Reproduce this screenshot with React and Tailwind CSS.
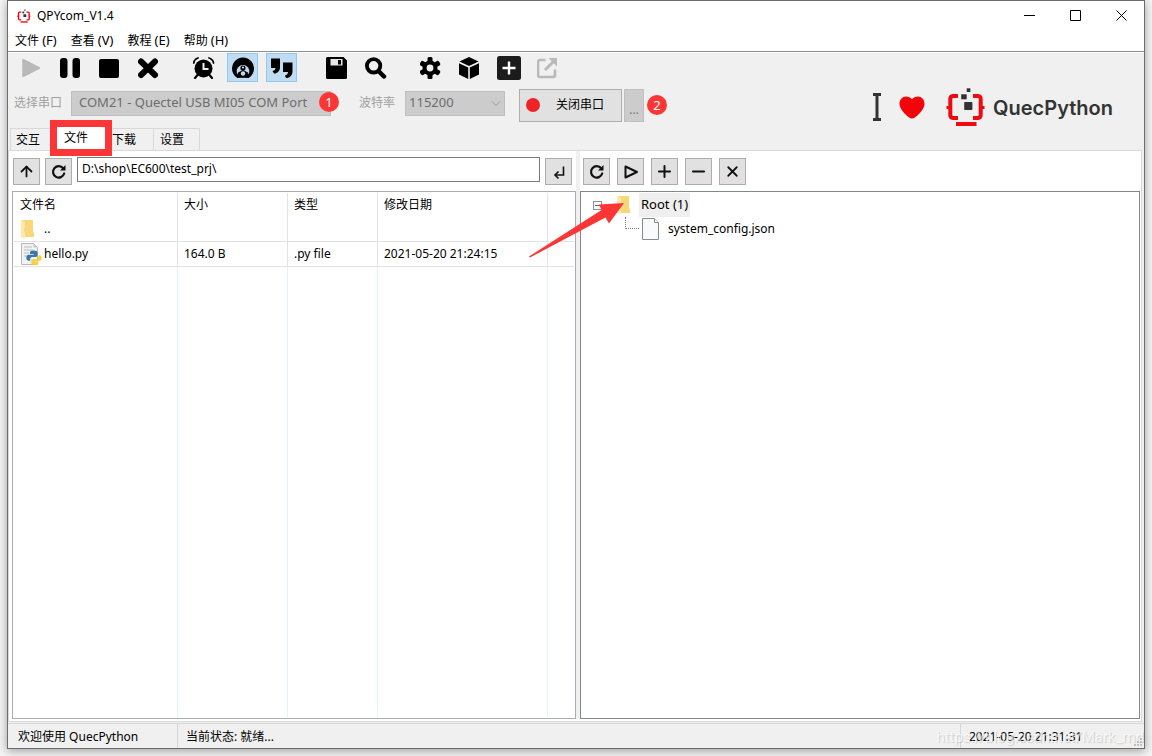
import { Minus, Plus, X, ArrowUp } from 'lucide-react';

const menus = [
  { label: '文件', hotkey: '(F)' },
  { label: '查看', hotkey: '(V)' },
  { label: '教程', hotkey: '(E)' },
  { label: '帮助', hotkey: '(H)' },
];

const PlayIcon = () => (
  <svg viewBox="0 0 22 22" className="w-[22px] h-[22px]" fill="currentColor">
    <path d="M2 2.500v17L18.500 11z" stroke="currentColor" strokeWidth="1.5" strokeLinejoin="round" />
  </svg>
);

const PauseIcon = () => (
  <svg viewBox="0 0 22 22" className="w-[22px] h-[22px]" fill="currentColor">
    <rect x="0" y="1" width="7.500" height="20" rx="3" />
    <rect x="12.500" y="1" width="7.500" height="20" rx="3" />
  </svg>
);

const StopIcon = () => (
  <svg viewBox="0 0 22 22" className="w-[22px] h-[22px]" fill="currentColor">
    <rect x="0" y="2" width="20" height="19" rx="2" />
  </svg>
);

const ClearIcon = () => (
  <svg viewBox="0 0 22 22" className="w-[22px] h-[22px]" fill="none" stroke="currentColor" strokeWidth="6" strokeLinecap="round">
    <path d="M3 4.500l14 13.500M17 4.500L3 18" />
  </svg>
);

const AlarmIcon = () => (
  <svg viewBox="0 0 22 22" className="w-[22px] h-[22px]" fill="none" stroke="currentColor">
    <circle cx="10.500" cy="11.500" r="9" fill="currentColor" stroke="none" />
    <path d="M.8 6C1 4 2.500 1.800 5 1M20.500 6C20.300 4 18.500 1.800 16 1" strokeWidth="1.800" strokeLinecap="round" />
    <path d="M4.500 18L2 21M16.500 18l2.500 3" strokeWidth="2.200" strokeLinecap="round" />
    <path d="M10.500 6v6h5" stroke="#f0f0f0" strokeWidth="2" />
  </svg>
);

const DebugIcon = () => (
  <svg viewBox="0 0 22 22" className="w-[22px] h-[22px]">
    <path d="M5 20.800A11 11 0 1 1 17 20.800z" fill="#000" />
    <path d="M7.500 20.800L4.800 15.500A6.300 6.300 0 1 1 17.200 15.500L14.500 20.800z" fill="#c0dcf3" />
    <path d="M5 20.800L6 16l2.200.500v4.300zM17 20.800L16 16l-2.200.500v4.300z" fill="#000" />
    <circle cx="11" cy="11" r="2.600" fill="#000" />
    <circle cx="11" cy="10.500" r="1.100" fill="#c0dcf3" />
    <path d="M6 15.500l5-2.500 5 2.500-2 5.300H8z" fill="#000" />
    <circle cx="11" cy="16.500" r="2.200" fill="#c0dcf3" />
  </svg>
);

const QuoteIcon = () => (
  <svg viewBox="0 0 24 22" className="w-6 h-[22px]" fill="currentColor">
    <path d="M1 1.500h9v8.500c0 4-2.500 6.500-6 6.500l-1.500-2.500c2-.500 3-1.500 3-3H1z" />
    <path d="M13 5.500h9.500V14c0 4.500-2.500 7-6.500 7l-1-2.500c2-.500 3-1.500 3-3.500H13z" />
  </svg>
);

const SaveIcon = () => (
  <svg viewBox="0 0 22 22" className="w-[22px] h-[22px]">
    <path d="M1.500 0h16L21 3.500v17a1.500 1.500 0 0 1-1.500 1.500h-18A1.500 1.500 0 0 1 0 20.500v-19A1.500 1.500 0 0 1 1.500 0z" fill="#000" />
    <path d="M4.500 2h12v6.500h-12z" fill="#e8e8e8" />
    <path d="M12 3h3v4.500h-3z" fill="#000" />
  </svg>
);

const FindIcon = () => (
  <svg viewBox="0 0 22 22" className="w-[22px] h-[22px]" fill="none" stroke="currentColor" strokeLinecap="round">
    <circle cx="8.600" cy="8.800" r="6.700" strokeWidth="3.800" />
    <path d="M14 14.500l5 5" strokeWidth="4.500" />
  </svg>
);

const GearIcon = () => (
  <svg viewBox="1 0 22 22" className="w-[22px] h-[22px]">
    <g fill="#000">
      <rect x="8.500" y="0" width="5" height="22" rx="1.500" />
      <rect x="8.500" y="0" width="5" height="22" rx="1.500" transform="rotate(60 11 11)" />
      <rect x="8.500" y="0" width="5" height="22" rx="1.500" transform="rotate(120 11 11)" />
      <circle cx="11" cy="11" r="7.500" />
    </g>
    <circle cx="11" cy="11" r="3.400" fill="#f0f0f0" />
  </svg>
);

const CubeIcon = () => (
  <svg viewBox="1 0 22 22" className="w-[22px] h-[22px]" fill="currentColor">
    <path d="M11 0l9.500 4.500L11 9 1.500 4.500z" />
    <path d="M1 6.200l9.200 4.300V22L1 17.500zM21 6.200l-9.200 4.300V22l9.200-4.500z" />
  </svg>
);

const AddIcon = () => (
  <svg viewBox="0 0 24 24" className="w-6 h-6">
    <rect width="24" height="24" rx="2.500" fill="#1c1c1c" />
    <path d="M12 5.500v13M5.500 12h13" stroke="#fff" strokeWidth="2.400" />
  </svg>
);

const ShareIcon = () => (
  <svg viewBox="1 0 22 22" className="w-[22px] h-[22px]" fill="none" stroke="currentColor" strokeWidth="2.600">
    <path d="M9.500 3H4a2 2 0 0 0-2 2v13a2 2 0 0 0 2 2h13a2 2 0 0 0 2-2v-5.500" />
    <path d="M9 13l9-9" strokeWidth="3" />
    <path d="M12.500 1H21v8.500z" fill="currentColor" stroke="none" />
  </svg>
);

const toolGroups = [
  [
    { name: 'Run', icon: PlayIcon, disabled: true },
    { name: 'Pause', icon: PauseIcon },
    { name: 'Stop', icon: StopIcon },
    { name: 'Clear', icon: ClearIcon },
  ],
  [
    { name: 'Timestamp', icon: AlarmIcon },
    { name: 'Debug', icon: DebugIcon, active: true },
    { name: 'Quote', icon: QuoteIcon, active: true },
  ],
  [
    { name: 'Save', icon: SaveIcon },
    { name: 'Find', icon: FindIcon },
  ],
  [
    { name: 'Settings', icon: GearIcon },
    { name: 'Package', icon: CubeIcon },
    { name: 'Add', icon: AddIcon },
    { name: 'Export', icon: ShareIcon, disabled: true },
  ],
];

const RefreshIcon = () => (
  <svg viewBox="0 0 16 16" className="w-4 h-4" fill="none" stroke="#111" strokeWidth="2.200">
    <path d="M13.200 9.500A5.700 5.700 0 1 1 12.200 4.300" strokeLinecap="round" />
    <path d="M14.500 1v5.500H9z" fill="#111" stroke="none" />
  </svg>
);

const TriangleIcon = () => (
  <svg viewBox="0 0 16 16" className="w-4 h-4" fill="none" stroke="#111" strokeWidth="2" strokeLinejoin="round">
    <path d="M2.500 2.500v11L14 8z" />
  </svg>
);

const EnterIcon = () => (
  <svg viewBox="0 0 16 16" className="w-4 h-4" fill="none" stroke="#111" strokeWidth="1.600">
    <path d="M12.500 2.500v8.500H4" />
    <path d="M7.500 7.500L4 11l3.500 3.500" />
  </svg>
);

const FolderIcon = () => (
  <svg viewBox="0 0 16 20" className="w-4 h-5 shrink-0">
    <path d="M2 1h11v12l1 1v4H5z" fill="#f9d778" />
    <path d="M1 1l4 2v5l-1 2 1 9.500L1 18z" fill="#fce9a9" />
  </svg>
);

const PyFileIcon = () => (
  <svg viewBox="0 0 22 22" className="w-[22px] h-[22px] shrink-0">
    <path d="M1.500 .500h12l4 4v17h-16z" fill="#f1f2f3" stroke="#b5b9bc" />
    <path d="M13.500 .500v4h4z" fill="#c5c9cc" />
    <path d="M4 4h8M4 7h9M4 10h5M4 13h3" stroke="#b9bec2" />
    <path d="M13.500 7.500c-2.800 0-3.500.800-3.500 2.200V11h3.700v.700H9c-2 0-2.700 1.500-2.700 3.100s.800 3 2.700 3h1.200V16c0-1.200.900-2 2-2h3.600c1 0 1.700-.800 1.700-1.700V9.700c0-1.400-1.200-2.200-4-2.200z" fill="#3b77a8" />
    <path d="M14.800 22c2.700 0 3.600-.800 3.600-2.200v-1.200h-3.600V18h4.500c1.500 0 2.500-1.100 2.500-2.900s-1-2.800-2.400-2.800h-1.100V14c0 1.200-.900 2-1.900 2h-3.500c-1 0-1.700.800-1.700 1.700v2.100c0 1.400 1.100 2.200 3.600 2.200z" fill="#f7d046" />
  </svg>
);

const FileIcon = () => (
  <svg viewBox="0 0 18 22" className="w-[18px] h-[22px] shrink-0">
    <path d="M.500 .500h12l4 4v17H.500z" fill="#f8fafb" stroke="#8a8a8a" />
    <path d="M12.500 .500v4h4" fill="#fff" stroke="#8a8a8a" />
  </svg>
);

const Bracket = ({ className }) => (
  <svg viewBox="0 0 40 40" className={className}>
    <g fill="none" stroke="#ee0a10" strokeWidth="4">
      <path d="M12 9H7a3 3 0 0 0-2.700 3v16a3 3 0 0 0 2.700 3h5" />
      <path d="M27 9h5a3 3 0 0 1 2.700 3v16a3 3 0 0 1-2.700 3h-5" />
      <path d="M10 37h20.500" />
      <path d="M.500 20.500h3M35.500 20.500h3" strokeWidth="3" />
    </g>
    <g fill="#333">
      <rect x="20.700" y="1.300" width="3.700" height="3.700" />
      <rect x="15.200" y="7.300" width="5.500" height="5" />
      <rect x="18.200" y="15" width="8.200" height="8" rx=".8" />
    </g>
  </svg>
);

const Badge = ({ children, className = '' }) => (
  <span className={`w-5 h-5 rounded-full bg-[#fc3636] text-white text-[13px] leading-5 text-center ${className}`}>
    {children}
  </span>
);

const SmallButton = ({ label, children }) => (
  <button
    aria-label={label}
    className="w-[27px] h-[27px] shrink-0 flex items-center justify-center bg-[#e1e1e1] border border-[#adadad] text-[#111]"
  >
    {children}
  </button>
);

const TitleBar = () => (
  <header className="bg-white">
    <div className="h-[29px] flex items-center pl-[9px]">
      <Bracket className="w-[14px] h-[14px]" />
      <h1 className="pl-[6px]">QPYcom_V1.4</h1>
      <div className="ml-auto flex">
        <button aria-label="Minimize" className="w-[46px] flex justify-center">
          <svg viewBox="0 0 11 11" className="w-[11px] h-[11px]" stroke="#000"><path d="M0 5.500h11" /></svg>
        </button>
        <button aria-label="Maximize" className="w-[46px] flex justify-center">
          <svg viewBox="0 0 11 11" className="w-[11px] h-[11px]" stroke="#000" fill="none"><path d="M.500 .500h10v10H.500z" /></svg>
        </button>
        <button aria-label="Close" className="w-[46px] flex justify-center">
          <svg viewBox="0 0 11 11" className="w-[11px] h-[11px]" stroke="#000"><path d="M.500 .500l10 10M10.500 .500l-10 10" /></svg>
        </button>
      </div>
    </div>
    <nav className="h-[22px] flex items-center gap-[14px] pl-[7px] border-b border-[#8f8f8f]">
      {menus.map(({ label, hotkey }) => (
        <button key={hotkey}>
          {label} <span className="text-[13px]">{hotkey}</span>
        </button>
      ))}
    </nav>
  </header>
);

const ToolBar = () => (
  <div className="flex gap-6 pl-2">
    {toolGroups.map((group, i) => (
      <div key={i} className="flex gap-2">
        {group.map(({ name, icon: Icon, active, disabled }) => (
          <button
            key={name}
            aria-label={name}
            disabled={disabled}
            className={`w-[31px] h-[29px] flex items-center justify-center border ${
              active ? 'bg-[#c0dcf3] border-[#90c8f6]' : 'border-transparent'
            } ${disabled ? 'text-[#b9b9b9]' : 'text-black'}`}
          >
            <Icon />
          </button>
        ))}
      </div>
    ))}
  </div>
);

const Logo = () => (
  <div className="ml-auto flex items-center pr-[31px] pt-1">
    <svg viewBox="0 0 8 28" className="w-2 h-7"><path d="M0 1.500h8M0 26.500h8M4 1v26" stroke="#333" strokeWidth="3" /></svg>
    <svg viewBox="0 0 26 23" className="ml-[18px] w-[26px] h-[23px]" fill="#f20409">
      <path d="M13 22.500C10 22.500 1 14.500 .500 8.500 .200 3.500 3.500 .500 7 .500c2.500 0 4.500 1 6 2.800C14.500 1.500 16.500 .500 19 .500c3.500 0 6.800 3 6.500 8-.500 6-9.500 14-12.500 14z" />
    </svg>
    <Bracket className="ml-[21px] w-10 h-10" />
    <span className="pl-[7px] pt-px font-['Inter',sans-serif] font-semibold text-[20px] text-[#333]">QuecPython</span>
  </div>
);

const PortBar = () => (
  <div className="flex items-center h-[46px] pl-[6px] text-[#a0a0a0]">
    <label htmlFor="port" className="pb-1">选择串口</label>
    <div className="relative ml-[9px] mb-1">
      <select
        id="port"
        disabled
        className="block w-[260px] h-[25px] pl-[7px] appearance-none bg-[#ccc] border border-[#bfbfbf] text-[13px] text-[#6d6d6d]"
      >
        <option>COM21 - Quectel USB MI05 COM Port</option>
      </select>
      <Badge className="absolute -right-2 top-px">1</Badge>
    </div>
    <label htmlFor="baud" className="ml-7 pb-1">波特率</label>
    <div className="relative ml-[10px] mb-1">
      <select
        id="baud"
        disabled
        className="block w-[100px] h-[25px] pl-[3px] appearance-none bg-[#ccc] border border-[#bfbfbf] text-[13px] text-[#6d6d6d]"
      >
        <option>115200</option>
      </select>
      <svg viewBox="0 0 10 6" className="absolute right-1 top-[10px] w-[10px] h-[6px]" fill="none" stroke="#9a9a9a">
        <path d="M1 .500l4 4 4-4" />
      </svg>
    </div>
    <button className="ml-[14px] w-[103px] h-[33px] flex items-center pl-[6px] gap-4 bg-[#e1e1e1] border border-[#adadad] text-black">
      <span className="w-[14px] h-[14px] rounded-full bg-[#ee2326]" />
      关闭串口
    </button>
    <button aria-label="More" className="ml-[2px] w-5 h-[33px] flex items-end justify-center pb-[2px] bg-[#ccc] border border-[#bfbfbf] text-[#777]">
      ...
    </button>
    <Badge className="ml-[3px]">2</Badge>
    <Logo />
  </div>
);

const Tabs = () => (
  <div role="tablist" className="flex items-end pl-[2px] h-[22px]">
    <button role="tab" className="w-[46px] h-[22px] shrink-0 pl-[5px] text-left border-l border-t border-[#d9d9d9]">交互</button>
    <button role="tab" aria-selected="true" className="relative w-[50px] h-6 shrink-0 bg-white pl-2 text-left">
      文件
      <span className="absolute -left-[6px] -top-[6px] w-[62px] h-9 border-[7px] border-[#fc3636]" />
    </button>
    <button role="tab" className="w-12 h-[22px] shrink-0 pl-[6px] text-left border-r border-t border-[#d9d9d9]">下载</button>
    <button role="tab" className="w-[46px] h-[22px] shrink-0 pl-[6px] text-left border-r border-t border-[#d9d9d9]">设置</button>
  </div>
);

const files = [
  { icon: FolderIcon, name: '..', size: '', type: '', date: '' },
  { icon: PyFileIcon, name: 'hello.py', size: '164.0 B', type: '.py file', date: '2021-05-20 21:24:15' },
];

const cell = 'border-r border-b border-[#e2e2e2] pl-[6px] whitespace-nowrap';
const head = 'border-r border-[#e2e2e2] pl-[6px] text-left font-normal';
const blank = 'border-r border-[#e6f1fa]';

const LocalFiles = () => (
  <section className="relative flex flex-col min-w-0">
    <div className="flex items-start gap-[5px] pt-[7px] pl-px h-10">
      <SmallButton label="Up"><ArrowUp size={17} strokeWidth={2.500} /></SmallButton>
      <SmallButton label="Refresh"><RefreshIcon /></SmallButton>
      <input
        aria-label="Path"
        defaultValue={'D:\\shop\\EC600\\test_prj\\'}
        className="flex-1 min-w-0 h-[25px] px-1 pb-[2px] -mt-px bg-white border border-[#7a7a7a]"
      />
      <div className="pr-1"><SmallButton label="Go"><EnterIcon /></SmallButton></div>
    </div>
    <div className="flex-1 min-h-0 border border-[#abadb3] p-px">
      <table className="w-full h-full table-fixed border-separate border-spacing-0">
        <colgroup>
          <col className="w-[164px]" />
          <col className="w-[110px]" />
          <col className="w-[90px]" />
          <col className="w-[170px]" />
          <col />
        </colgroup>
        <thead>
          <tr className="h-6">
            <th className={head}>文件名</th>
            <th className={head}>大小</th>
            <th className={head}>类型</th>
            <th className={head}>修改日期</th>
            <th />
          </tr>
        </thead>
        <tbody>
          {files.map(({ icon: Icon, name, size, type, date }) => (
            <tr key={name} className="h-[25px]">
              <td className={cell}>
                <div className="flex items-center">
                  <span className="w-6 flex"><Icon /></span>
                  {name}
                </div>
              </td>
              <td className={cell}>{size}</td>
              <td className={cell}>{type}</td>
              <td className={cell}>{date}</td>
              <td className="border-b border-[#e2e2e2]" />
            </tr>
          ))}
          <tr>
            <td className={blank} />
            <td className={blank} />
            <td className={blank} />
            <td className={blank} />
            <td />
          </tr>
        </tbody>
      </table>
    </div>
  </section>
);

const DeviceFiles = () => (
  <section className="relative flex flex-col min-w-0">
    <div className="flex items-start gap-[7px] pt-[7px] pl-[3px] h-10">
      <SmallButton label="Refresh device"><RefreshIcon /></SmallButton>
      <SmallButton label="Run file"><TriangleIcon /></SmallButton>
      <SmallButton label="Add file"><Plus size={19} strokeWidth={2.500} /></SmallButton>
      <SmallButton label="Remove file"><Minus size={19} strokeWidth={2.500} /></SmallButton>
      <SmallButton label="Delete"><X size={17} strokeWidth={2.500} /></SmallButton>
    </div>
    <ul className="flex-1 min-h-0 border border-[#828790] pl-3 pt-px">
      <li>
        <div className="flex items-center h-6">
          <svg viewBox="0 0 9 9" className="w-[9px] h-[9px]">
            <rect x=".5" y=".5" width="8" height="8" fill="#fff" stroke="#919191" />
            <path d="M2 4.500h5" stroke="#4b63a7" />
          </svg>
          <span className="ml-[14px] flex"><FolderIcon /></span>
          <span className="ml-[7px] h-6 px-[2px] text-[13px] leading-[22px] bg-[#efefef]">Root (1)</span>
        </div>
        <ul>
          <li className="flex items-center h-6 pl-8">
            <span className="w-[14px] h-3 mb-3 border-l border-b border-dotted border-[#808080]" />
            <span className="ml-[3px] flex"><FileIcon /></span>
            <span className="pl-[8px]">system_config.json</span>
          </li>
        </ul>
      </li>
    </ul>
    {/* Pointer to the root folder */}
    <svg viewBox="0 0 100 60" className="absolute -left-[52px] top-[48px] w-[100px] h-[60px] pointer-events-none">
      <path d="M1 57.500L73.500 11 71 5.500 96 4 81 24.500 77.500 18.500 2 58.500z" fill="#fc3636" />
    </svg>
  </section>
);

const StatusBar = () => (
  <footer className="relative h-[25px] shrink-0 flex items-stretch border-t border-[#d7d7d7] bg-[#f0f0f0] leading-[26px] overflow-hidden">
    <span className="w-[170px] pl-[10px] border-r border-[#d7d7d7]">欢迎使用 QuecPython</span>
    <span className="flex-1 pl-2">当前状态: 就绪...</span>
    <span className="w-[184px] pl-2 border-l border-[#d7d7d7]">2021-05-20 21:31:31</span>
    <span className="absolute right-0 top-0 whitespace-nowrap font-['Roboto',sans-serif] text-[15px] text-white/70 [text-shadow:1px_1px_1px_rgba(0,0,0,0.15)]">
      https://blog.csdn.net/Mark_md
    </span>
    <svg viewBox="0 0 8 8" className="absolute right-[2px] bottom-[2px] w-2 h-2" fill="#bfbfbf">
      <path d="M6 0h2v2H6zM3 3h2v2H3zM6 3h2v2H6zM0 6h2v2H0zM3 6h2v2H3zM6 6h2v2H6z" />
    </svg>
  </footer>
);

const App = () => (
  <div className="h-screen overflow-hidden bg-[#f4f4f4] pl-[7px] pr-[7px] pb-[7px] text-[12px] text-black font-['Noto_Sans','Noto_Sans_CJK_SC',sans-serif]">
    <div className="h-full flex flex-col bg-[#f0f0f0] border border-[#6b6b6b] shadow-[0_2px_9px_rgba(0,0,0,0.35)]">
      <TitleBar />
      <div className="border-t border-white">
        <ToolBar />
        <PortBar />
      </div>
      <Tabs />
      <main className="flex-1 min-h-0 mr-[2px] mb-px bg-white border border-[#d9d9d9] pl-[3px] pr-px pb-[2px] grid grid-cols-[564fr_4px_560fr]">
        <LocalFiles />
        <div className="bg-[#f0f0f0]" />
        <DeviceFiles />
      </main>
      <StatusBar />
    </div>
  </div>
);

export default App;
